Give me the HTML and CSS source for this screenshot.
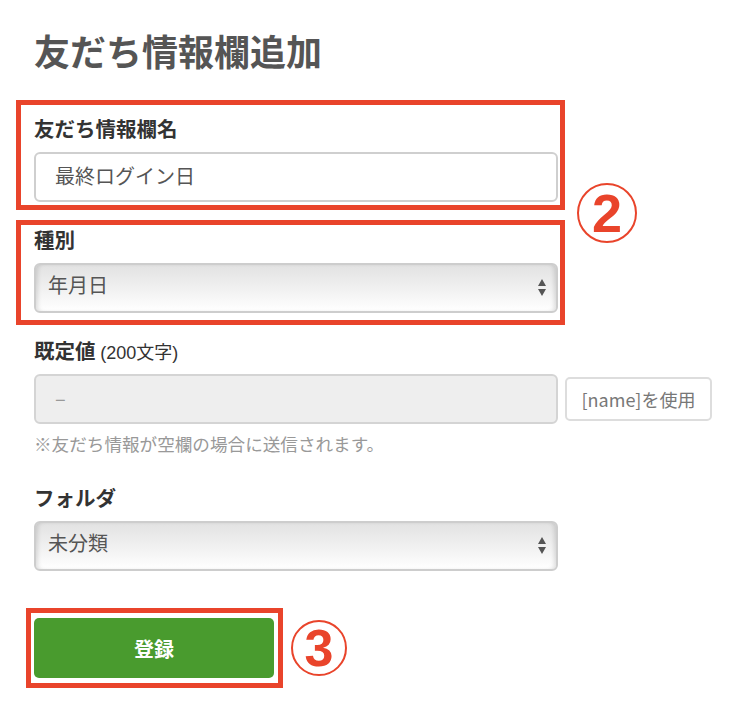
FILE: index.html
```html
<!DOCTYPE html>
<html lang="ja">
<head>
<meta charset="utf-8">
<title>友だち情報欄追加</title>
<link rel="stylesheet" href="styles.css">
</head>
<body>
<div class="page">
  <h1 class="title">友だち情報欄追加</h1>

  <div class="field">
    <div class="label">友だち情報欄名</div>
    <div class="input"><span class="val">最終ログイン日</span></div>
  </div>

  <div class="field">
    <div class="label">種別</div>
    <div class="select">
      <span class="val">年月日</span>
      <svg class="arrows" width="8" height="18" viewBox="0 0 8 18"><path d="M4 0 L8 7 L0 7 Z M0 10 L8 10 L4 17 Z" fill="#555"/></svg>
    </div>
  </div>

  <div class="field field-default">
    <div class="label">既定値 <span class="sub">(200文字)</span></div>
    <div class="row">
      <div class="input input-disabled"><span class="val">–</span></div>
      <div class="btn-name">[name]を使用</div>
    </div>
    <div class="note">※友だち情報が空欄の場合に送信されます。</div>
  </div>

  <div class="field">
    <div class="label">フォルダ</div>
    <div class="select">
      <span class="val">未分類</span>
      <svg class="arrows" width="8" height="18" viewBox="0 0 8 18"><path d="M4 0 L8 7 L0 7 Z M0 10 L8 10 L4 17 Z" fill="#555"/></svg>
    </div>
  </div>

  <div class="submit">登録</div>

  <div class="mark mark-1"></div>
  <div class="mark mark-2"></div>
  <div class="mark mark-3"></div>
  <div class="num num-2">2</div>
  <div class="num num-3">3</div>
</div>
</body>
</html>
```

FILE: styles.css
```css
html, body {
  margin: 0;
  background: #fff;
}
body {
  font-family: "Noto Sans CJK JP", "Noto Sans", sans-serif;
  color: #333;
}
.page {
  position: relative;
  width: 748px;
  height: 720px;
  box-sizing: border-box;
  padding: 28px 0 0 34px;
}
.title {
  margin: 0 0 44px;
  font-size: 36px;
  line-height: 44px;
  font-weight: 700;
  color: #555;
}
.field {
  width: 524px;
  margin-bottom: 25px;
}
.field-default {
  margin-bottom: 28px;
}
.label {
  font-size: 20.5px;
  line-height: 24px;
  height: 24px;
  font-weight: 700;
  color: #333;
  margin-bottom: 12px;
}
.sub {
  font-family: "Liberation Sans", "Noto Sans CJK JP", sans-serif;
  font-size: 18px;
  line-height: 1;
  font-weight: 400;
}
.input {
  box-sizing: border-box;
  width: 524px;
  height: 50px;
  border: 2px solid #cfcfcf;
  border-radius: 6px;
  padding: 0 19px;
  display: flex;
  align-items: center;
  font-size: 20px;
  color: #555;
  background: #fff;
}
.input .val {
  padding-bottom: 3px;
}
.input-disabled {
  background: #eee;
  color: #999;
  border-color: #d4d4d4;
}
.select {
  box-sizing: border-box;
  width: 524px;
  height: 50px;
  border: 2px solid #cdcdcd;
  border-radius: 6px;
  padding: 0 10px 0 12px;
  display: flex;
  align-items: center;
  font-size: 20px;
  color: #555;
  background: linear-gradient(#e2e2e2, #f3f3f3 60%, #fff);
  box-shadow: inset 4px 0 4px -2px rgba(0,0,0,0.12), inset -4px 0 4px -2px rgba(0,0,0,0.12);
}
.select .val {
  padding-bottom: 8px;
}
.arrows {
  margin-left: auto;
  display: block;
}
.row {
  display: flex;
  align-items: center;
  gap: 7px;
  width: 680px;
}
.row .input {
  flex: none;
}
.btn-name {
  box-sizing: border-box;
  width: 147px;
  height: 44px;
  border: 2px solid #ddd;
  border-radius: 5px;
  display: flex;
  align-items: center;
  justify-content: center;
  font-size: 18px;
  color: #777;
  background: #fff;
}
.note {
  margin-top: 7px;
  font-size: 17.6px;
  line-height: 26px;
  height: 26px;
  color: #999;
}
.submit {
  margin-top: 47px;
  width: 240px;
  height: 60px;
  border-radius: 5px;
  background: #499b2e;
  color: #fff;
  font-size: 20px;
  font-weight: 700;
  display: flex;
  align-items: center;
  justify-content: center;
}
.mark {
  position: absolute;
  box-sizing: border-box;
  border: 5px solid #e9442b;
}
.mark-1 { left: 16px; top: 100px; width: 549px; height: 110px; }
.mark-2 { left: 16px; top: 220px; width: 549px; height: 105px; }
.mark-3 { left: 26px; top: 608px; width: 257px; height: 80px; }
.num {
  position: absolute;
  box-sizing: border-box;
  border: 2.5px solid #e9442b;
  border-radius: 50%;
  color: #e9442b;
  font-family: "Liberation Sans", Arial, sans-serif;
  font-weight: 700;
  display: flex;
  align-items: center;
  justify-content: center;
}
.num-2 { left: 577px; top: 183px; width: 60px; height: 60px; font-size: 54px; }
.num-3 { left: 291px; top: 620px; width: 56px; height: 56px; font-size: 52px; }
```
